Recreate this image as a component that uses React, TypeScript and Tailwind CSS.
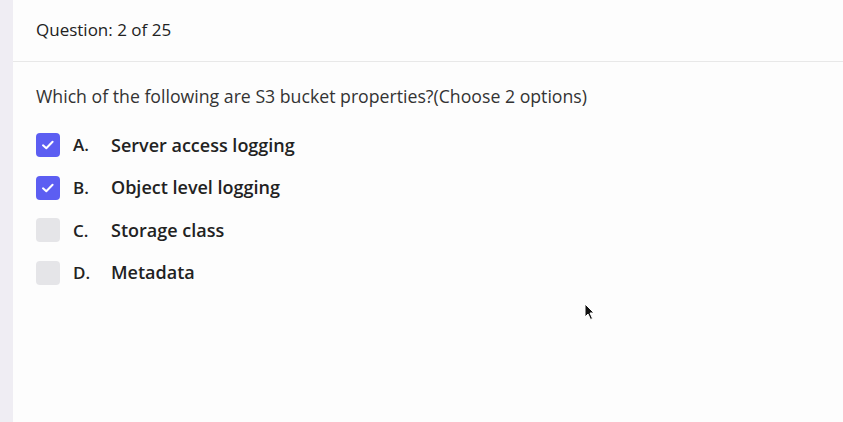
import React from "react";

const options = [
  { l: "A.", t: "Server access logging", c: true },
  { l: "B.", t: "Object level logging", c: true },
  { l: "C.", t: "Storage class", c: false },
  { l: "D.", t: "Metadata", c: false },
];

export default function App() {
  return (
    <div className="relative flex h-[422px] w-[843px] overflow-hidden bg-white" style={{ fontFamily: "'Open Sans', 'Noto Sans', sans-serif" }}>
      <div className="w-[13px] shrink-0 bg-[#efedf3]" />
      <div className="flex flex-1 flex-col bg-[#fdfdfd]">
        <div className="flex h-[62px] items-center border-b border-[#e8e8e8] pb-[2px] pl-[23px] text-[17px] text-[#222]">
          Question: 2 of 25
        </div>
        <div className="pl-[23px] pt-[21px] text-[17.7px] leading-[26px] text-[#333]">
          Which of the following are S3 bucket properties?(Choose 2 options)
        </div>
        <div className="mt-[24px] flex flex-col gap-[18.67px] pl-[23px]">
          {options.map((o) => (
            <div key={o.l} className="flex h-[24px] items-center">
              {o.c ? (
                <div className="flex h-[24px] w-[24px] items-center justify-center rounded-[4px] bg-[#5c5ef2]">
                  <svg width="16" height="16" viewBox="0 0 16 16" fill="none">
                    <path d="M3 8.3 L6.3 11.3 L12.6 4.8" stroke="white" strokeWidth="2" strokeLinecap="round" strokeLinejoin="round" />
                  </svg>
                </div>
              ) : (
                <div className="h-[24px] w-[24px] rounded-[4px] bg-[#e5e5e8]" />
              )}
              <span className="ml-[13px] w-[38px] text-[17px] font-semibold text-[#222]">{o.l}</span>
              <span className="text-[18px] font-semibold text-[#222]">{o.t}</span>
            </div>
          ))}
        </div>
      </div>
      <svg className="absolute left-[584px] top-[303px]" width="12" height="18" viewBox="0 0 12 18">
        <path d="M1 1 L1 14 L4 11 L6.5 16.5 L8.5 15.5 L6 10 L10 10 Z" fill="#111" stroke="white" strokeWidth="1" />
      </svg>
    </div>
  );
}
